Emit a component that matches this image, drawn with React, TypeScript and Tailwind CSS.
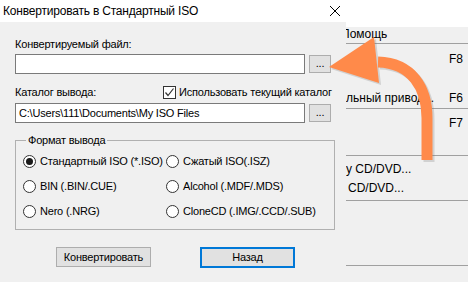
import React from 'react'

const ui = "font-['Liberation_Sans',Arial,sans-serif] text-[11px] tracking-[-0.2px] text-black"
const seg = "font-['Liberation_Sans',Arial,sans-serif] text-[12px] text-black"

function Radio({ checked, label }: { checked?: boolean; label: string }) {
    return (
        <div className="flex items-center h-[14px] gap-[4px]">
            <span className="w-[13px] h-[13px] rounded-full border border-[#333] bg-white flex items-center justify-center">
                {checked && <span className="w-[7px] h-[7px] rounded-full bg-[#1a1a1a]"></span>}
            </span>
            <span className="whitespace-nowrap">{label}</span>
        </div>
    )
}

function Dots() {
    return (
        <button className="w-[22px] h-[18px] border border-[#adadad] bg-[#e1e1e1] text-[11px] leading-none pb-[3px] flex items-end justify-center">
            ...
        </button>
    )
}

function BackWindow() {
    return (
        <div className={`absolute inset-0 bg-[#f0f0f0] ${seg}`}>
            <div className="h-[27px] bg-white"></div>
            <div className="pl-[341px] flex flex-col">
                <div className="h-[16px] leading-[14px]">Помощь</div>
                <div className="h-px bg-[#a0a0a0] ml-[5px]"></div>
                <div className="h-[64px] relative">
                    <span className="absolute right-[5px] top-[6px]">F8</span>
                    <span className="absolute left-[5px] top-[45px] whitespace-nowrap">льный привод...</span>
                    <span className="absolute right-[5px] top-[45px]">F6</span>
                </div>
                <div className="h-px bg-[#a0a0a0] ml-[5px]"></div>
                <div className="h-[46px] relative">
                    <span className="absolute right-[5px] top-[5px]">F7</span>
                </div>
                <div className="h-px bg-[#a0a0a0] ml-[5px]"></div>
                <div className="h-[44px] relative">
                    <span className="absolute left-[5px] top-[4px] whitespace-nowrap">y CD/DVD...</span>
                    <span className="absolute left-[7px] top-[23px] whitespace-nowrap">CD/DVD...</span>
                </div>
                <div className="h-px bg-[#a0a0a0] ml-[5px]"></div>
                <div className="h-[64px]"></div>
                <div className="h-px bg-[#a0a0a0] ml-[5px]"></div>
            </div>
        </div>
    )
}

export default function App() {
    return (
        <div className="relative w-[468px] h-[282px] overflow-hidden bg-[#f0f0f0]">
            <BackWindow />

            <div className={`absolute left-0 top-0 w-[346px] h-[282px] bg-[#f0f0f0] ${ui}`}>
                <div className={`h-[22px] bg-white flex items-center justify-between pl-[3px] pr-[4px] ${seg}`}>
                    <span className="leading-none">Конвертировать в Стандартный ISO</span>
                    <svg width="12" height="12" viewBox="0 0 12 12" className="mr-[1px]">
                        <path d="M1 1 L11 11 M11 1 L1 11" stroke="#000" strokeWidth="1" />
                    </svg>
                </div>

                <div className="pl-[15px] flex flex-col">
                    <div className="mt-[15px] h-[14px] leading-[14px]">Конвертируемый файл:</div>
                    <div className="mt-[3px] flex items-center gap-[4px]">
                        <div className="w-[290px] h-[20px] border border-[#7a7a7a] bg-white"></div>
                        <Dots />
                    </div>

                    <div className="mt-[11px] h-[14px] flex items-center">
                        <span className="w-[148px]">Каталог вывода:</span>
                        <span className="w-[13px] h-[13px] border border-[#333] bg-white flex items-center justify-center">
                            <svg width="11" height="11" viewBox="0 0 11 11">
                                <path d="M1.5 5.5 L4 8.5 L9.5 1.5" fill="none" stroke="#333" strokeWidth="1.2" />
                            </svg>
                        </span>
                        <span className="ml-[3px] whitespace-nowrap">Использовать текущий каталог</span>
                    </div>
                    <div className="mt-[4px] flex items-center gap-[4px]">
                        <div className="w-[290px] h-[20px] border border-[#7a7a7a] bg-white pl-[3px] leading-[18px]">
                            C:\Users\111\Documents\My ISO Files
                        </div>
                        <Dots />
                    </div>

                    <fieldset className="mt-[10px] w-[320px] h-[97px] border border-[#b0b0b0] pl-[7px] pt-[7px] m-0">
                        <legend className="ml-[3px] px-[2px] leading-[14px]">Формат вывода</legend>
                        <div className="grid grid-cols-[143px_auto] gap-y-[11px]">
                            <Radio checked label="Стандартный ISO (*.ISO)" />
                            <Radio label="Сжатый ISO(.ISZ)" />
                            <Radio label="BIN (.BIN/.CUE)" />
                            <Radio label="Alcohol (.MDF/.MDS)" />
                            <Radio label="Nero (.NRG)" />
                            <Radio label="CloneCD (.IMG/.CCD/.SUB)" />
                        </div>
                    </fieldset>

                    <div className="mt-[17px] pl-[41px] flex gap-[49px]">
                        <button className="w-[95px] h-[20px] border border-[#adadad] bg-[#e1e1e1] leading-none">
                            Конвертировать
                        </button>
                        <button className="w-[95px] h-[21px] border-2 border-[#0078d7] bg-[#e1e1e1] leading-none">
                            Назад
                        </button>
                    </div>
                </div>
            </div>

            <svg className="absolute left-0 top-0" width="468" height="282" viewBox="0 0 468 282">
                <g opacity="0.25" transform="translate(2,2)">
                    <path d="M427 160 L427 118 C427 88 412 63 378 62" fill="none" stroke="#777" strokeWidth="11" />
                    <polygon points="329,67 374,37 379,83" fill="#777" />
                </g>
                <path d="M427 160 L427 118 C427 88 412 63 378 62" fill="none" stroke="#ff8a4a" strokeWidth="11" />
                <polygon points="329,67 374,37 379,83" fill="#ff8a4a" />
            </svg>
        </div>
    )
}
